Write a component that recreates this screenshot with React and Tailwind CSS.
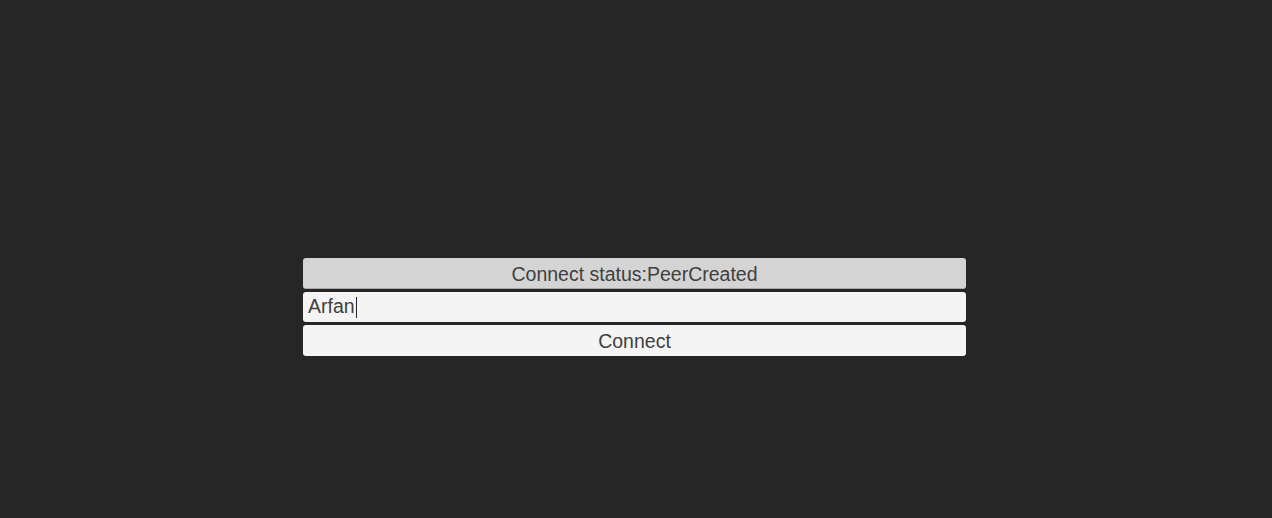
import React from "react";

export default function App() {
  return (
    <div
      className="w-[1272px] h-[518px] bg-[#262626] pt-[258px] pl-[303px]"
      style={{ fontFamily: '"Liberation Sans", Arial, sans-serif' }}
    >
      <div className="w-[663px] flex flex-col gap-[3px]">
        <div className="h-[31px] rounded-[3px] bg-[#d4d4d4] border-b border-[#a8a8a8] flex items-center justify-center pt-[4px] text-[19.5px] text-[#404040] leading-none">
          Connect status:PeerCreated
        </div>
        <div className="h-[30px] rounded-[3px] bg-[#f4f4f4] flex items-center pl-[5px] text-[19.5px] text-[#404040] leading-none">
          <span>Arfan</span>
          <span className="w-px h-[21px] bg-[#222] ml-[1px]"></span>
        </div>
        <div className="h-[31px] rounded-[3px] bg-[#f4f4f4] flex items-center justify-center pt-[3px] text-[19.5px] text-[#404040] leading-none">
          Connect
        </div>
      </div>
    </div>
  );
}
